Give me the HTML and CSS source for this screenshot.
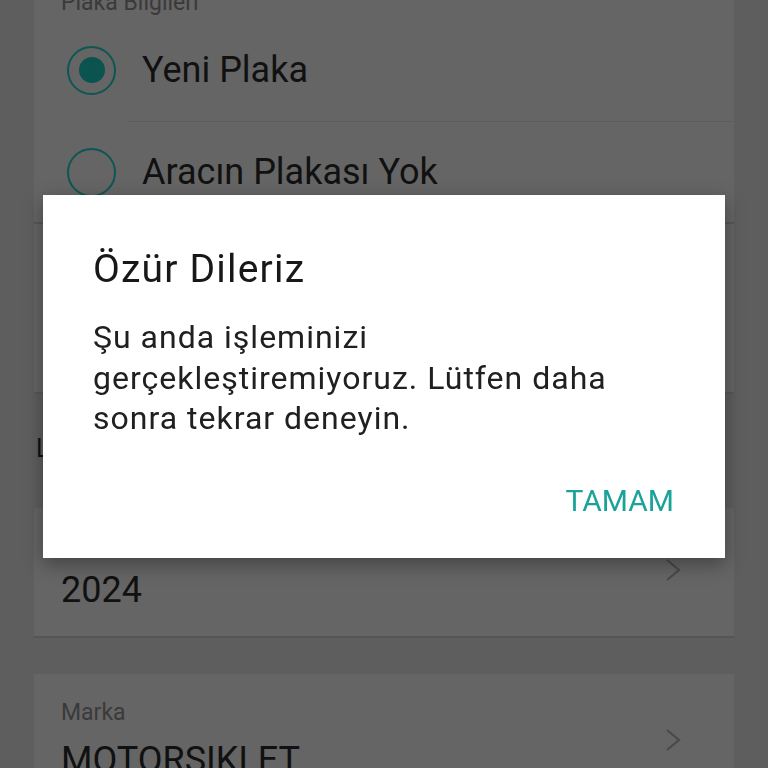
FILE: index.html
```html
<!DOCTYPE html>
<html lang="tr">
<head>
<meta charset="utf-8">
<title>Araç Bilgileri</title>
<link rel="stylesheet" href="styles.css">
</head>
<body>
<main class="page">
  <section class="card plate-card">
    <div class="card-label">Plaka Bilgileri</div>
    <div class="radio-row">
      <span class="radio checked"><span class="dot"></span></span>
      <span class="radio-text">Yeni Plaka</span>
    </div>
    <div class="separator"></div>
    <div class="radio-row last">
      <span class="radio"></span>
      <span class="radio-text">Aracın Plakası Yok</span>
    </div>
  </section>

  <section class="card blank-card"></section>

  <div class="section-title">Lütfen araç bilgilerini giriniz</div>

  <section class="card field-card first">
    <div class="field-text">
      <div class="field-label">Model Yılı</div>
      <div class="field-value">2024</div>
    </div>
    <svg class="chevron" viewBox="0 0 16 24" width="16" height="24"><polyline points="2,2 14,12 2,22"/></svg>
  </section>

  <section class="card field-card no-line">
    <div class="field-text">
      <div class="field-label">Marka</div>
      <div class="field-value">MOTORSIKLET</div>
    </div>
    <svg class="chevron" viewBox="0 0 16 24" width="16" height="24"><polyline points="2,2 14,12 2,22"/></svg>
  </section>
</main>

<div class="dialog" role="dialog">
  <h2 class="dialog-title">Özür Dileriz</h2>
  <p class="dialog-message">Şu anda işleminizi gerçekleştiremiyoruz. Lütfen daha sonra tekrar deneyin.</p>
  <div class="dialog-actions">
    <span class="dialog-button">TAMAM</span>
  </div>
</div>
</body>
</html>
```

FILE: styles.css
```css
html, body {
  margin: 0;
  padding: 0;
}

body {
  width: 768px;
  height: 768px;
  overflow: hidden;
  background: #5e5e5e;
  font-family: Roboto, "Liberation Sans", sans-serif;
  color: #111111;
}

.page {
  padding: 0 34px;
  display: flex;
  flex-direction: column;
}

.card {
  background: #656565;
}

.plate-card {
  margin-top: -24px;
  padding-top: 12px;
  border-bottom: 2px solid #575757;
}

.card-label {
  font-size: 23px;
  line-height: 30px;
  color: #3a3a3a;
  padding-left: 27px;
}

.radio-row {
  display: flex;
  align-items: center;
  height: 102px;
  margin-top: 1px;
  padding-left: 33px;
  gap: 26px;
}

.radio-row.last {
  margin-top: 0;
  height: 100px;
}

.radio {
  box-sizing: border-box;
  width: 49px;
  height: 49px;
  border: 2.5px solid #0e5652;
  border-radius: 50%;
  display: flex;
  align-items: center;
  justify-content: center;
  flex: none;
}

.dot {
  width: 26px;
  height: 26px;
  border-radius: 50%;
  background: #0a534e;
}

.radio-text {
  font-size: 36px;
  color: #111111;
}

.separator {
  height: 1px;
  margin-left: 94px;
  background: #5d5d5d;
}

.blank-card {
  height: 168px;
  border-bottom: 2px solid #575757;
}

.section-title {
  font-size: 25px;
  line-height: 30px;
  padding: 40px 0 44px 2px;
  color: #111111;
  white-space: nowrap;
}

.field-card {
  display: flex;
  align-items: center;
  padding: 22px 53px 22px 27px;
  border-bottom: 2px solid #555555;
  margin-bottom: 36px;
}

.field-card.first {
  padding-top: 20px;
  padding-bottom: 24px;
}

.field-card.no-line {
  border-bottom: none;
  padding-top: 24px;
}

.field-text {
  flex: 1;
  display: flex;
  flex-direction: column;
  gap: 10px;
}

.field-label {
  font-size: 23px;
  line-height: 30px;
  color: #3a3a3a;
}

.field-value {
  font-size: 36px;
  line-height: 44px;
  color: #111111;
}

.chevron {
  flex: none;
  fill: none;
  stroke: #4a4a4a;
  stroke-width: 2.2;
}

.dialog {
  position: fixed;
  left: 43px;
  top: 195px;
  width: 682px;
  height: 363px;
  box-sizing: border-box;
  background: #ffffff;
  padding: 52px 51px 0 50px;
  box-shadow: 0 6px 18px rgba(0, 0, 0, 0.35);
}

.dialog-title {
  margin: 0;
  font-size: 39px;
  line-height: 44px;
  font-weight: 400;
  letter-spacing: 1.2px;
  color: #181818;
}

.dialog-message {
  margin: 26px 0 0;
  font-size: 32px;
  line-height: 40.5px;
  letter-spacing: 1px;
  color: #202020;
}

.dialog-actions {
  display: flex;
  justify-content: flex-end;
  margin-top: 42px;
}

.dialog-button {
  font-size: 30px;
  line-height: 40px;
  color: #1ba39a;
}
```
